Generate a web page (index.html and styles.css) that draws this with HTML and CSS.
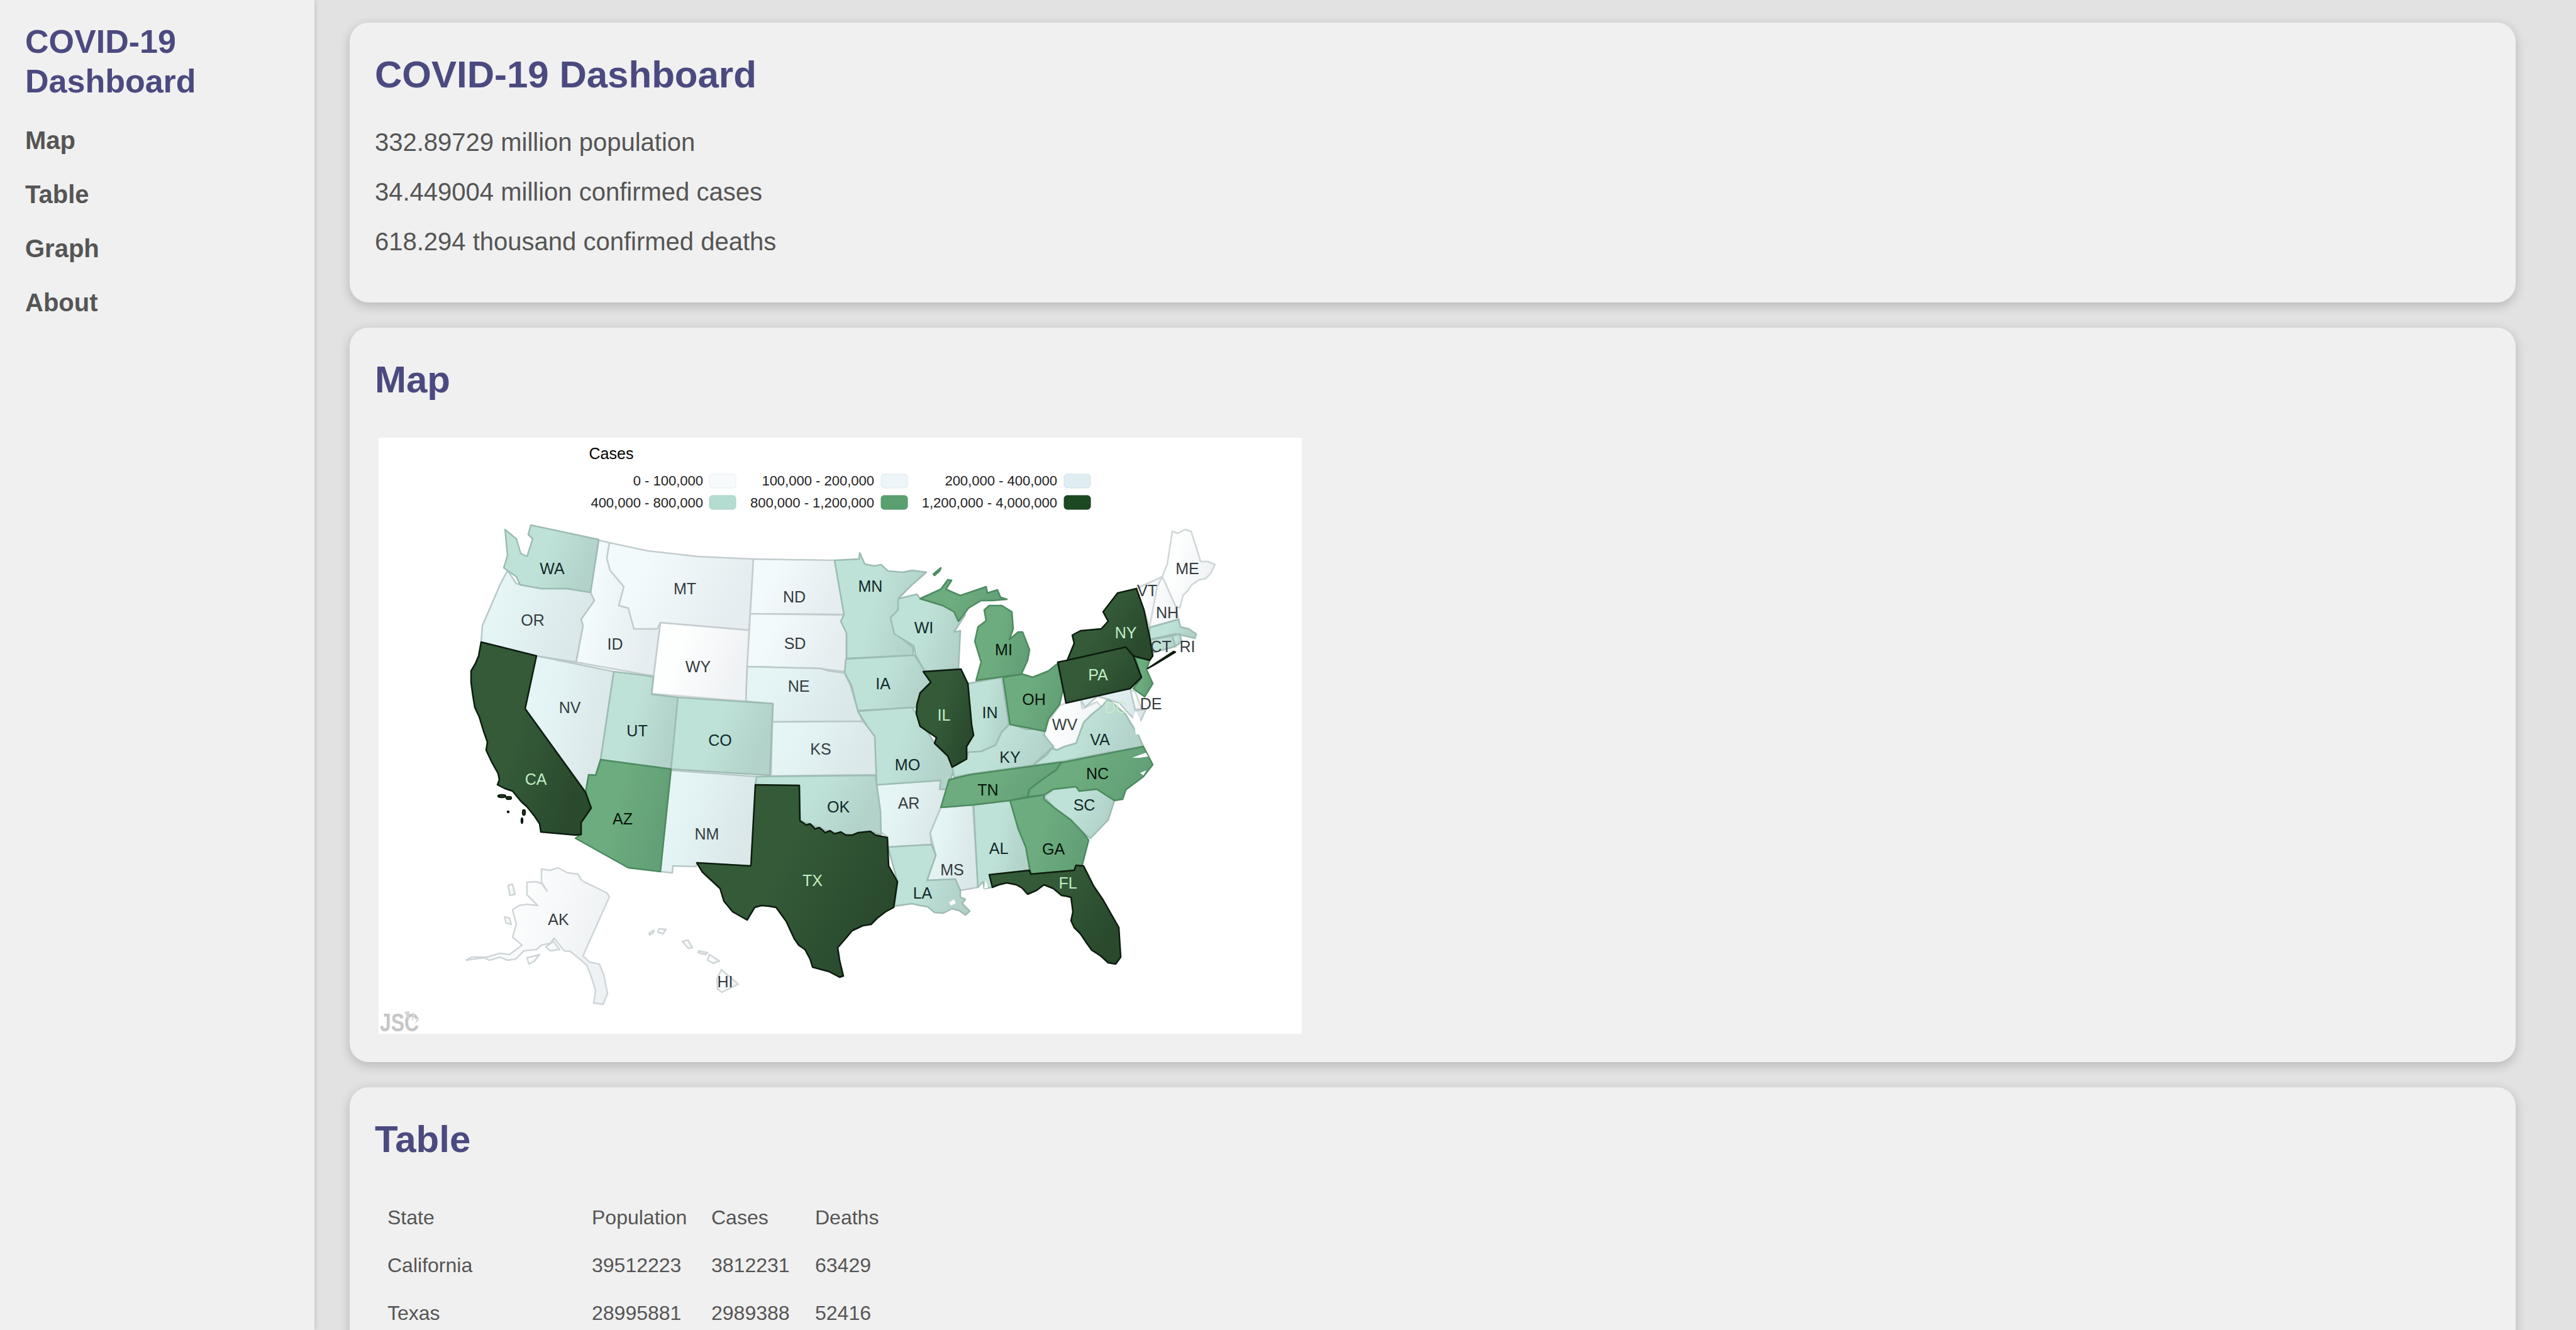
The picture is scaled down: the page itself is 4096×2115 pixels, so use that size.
FILE: index.html
```html
<!DOCTYPE html>
<html lang="en">
<head>
    <meta charset="UTF-8">
    <meta name="viewport" content="width=device-width, initial-scale=1.0">
    <title>COVID-19 Dashboard</title>
    <link rel="stylesheet" href="styles.css">
</head>
<body>
<div class="app">
    <nav class="sidebar">
        <h3>COVID-19 Dashboard</h3>
        <ul>
            <li><a href="#map">Map</a></li>
            <li><a href="#table">Table</a></li>
            <li><a href="#graph">Graph</a></li>
            <li><a href="#about">About</a></li>
        </ul>
    </nav>
    <main class="content">
        <section class="card">
            <h2>COVID-19 Dashboard</h2>
            <p>332.89729 million population</p>
            <p>34.449004 million confirmed cases</p>
            <p>618.294 thousand confirmed deaths</p>
        </section>

        <section class="card" id="map">
            <h2>Map</h2>
            <div class="map-wrap">
                <svg class="map" width="1468" height="948" viewBox="602 696 1468 948" xmlns="http://www.w3.org/2000/svg">
                    <defs>
                        <linearGradient id="l1" x1="0" y1="0" x2="1" y2="0.3"><stop offset="0.35" stop-color="#fdfefe"/><stop offset="1" stop-color="#eff2f4"/></linearGradient>
                        <linearGradient id="l2" x1="0" y1="0" x2="1" y2="0.3"><stop offset="0.3" stop-color="#f2fafc"/><stop offset="1" stop-color="#e6edf0"/></linearGradient>
                        <linearGradient id="l3" x1="0" y1="0" x2="1" y2="0.3"><stop offset="0.25" stop-color="#e5f5f5"/><stop offset="1" stop-color="#dbe7e9"/></linearGradient>
                        <linearGradient id="l4" x1="0" y1="0" x2="1" y2="0.3"><stop offset="0.5" stop-color="#bfe2d8"/><stop offset="1" stop-color="#b2d2ca"/></linearGradient>
                        <linearGradient id="l5" x1="0" y1="0" x2="1" y2="0.3"><stop offset="0.5" stop-color="#6dac7e"/><stop offset="1" stop-color="#63a077"/></linearGradient>
                        <linearGradient id="l6" x1="0" y1="0" x2="1" y2="0.5"><stop offset="0.5" stop-color="#345a38"/><stop offset="1" stop-color="#2a4a2e"/></linearGradient>
                    </defs>

                    <!-- legend -->
                    <g class="legend">
                        <text class="legend-title" x="972" y="730">Cases</text>
                        <text x="1118" y="772">0 - 100,000</text>
                        <text x="1390" y="772">100,000 - 200,000</text>
                        <text x="1681" y="772">200,000 - 400,000</text>
                        <text x="1118" y="807">400,000 - 800,000</text>
                        <text x="1390" y="807">800,000 - 1,200,000</text>
                        <text x="1681" y="807">1,200,000 - 4,000,000</text>
                        <rect x="1128" y="754" width="42" height="22" rx="5" fill="#f8fbfc" stroke="#e6edf0"/>
                        <rect x="1401" y="754" width="42" height="22" rx="5" fill="#edf5f8" stroke="#dde8ec"/>
                        <rect x="1692" y="754" width="42" height="22" rx="5" fill="#e0eef1" stroke="#d0e0e3"/>
                        <rect x="1128" y="788" width="42" height="22" rx="5" fill="#b5dcd0" stroke="#a8d0c4"/>
                        <rect x="1401" y="788" width="42" height="22" rx="5" fill="#5a9f6f" stroke="#4f9465"/>
                        <rect x="1692" y="788" width="42" height="22" rx="5" fill="#1c4822" stroke="#153a1b"/>
                    </g>

                    <!-- 0 - 100,000 -->
                    <g class="lvl1" fill="url(#l1)">
                        <polygon points="1050,990 1191,1002 1186,1115 1036,1103"/>
                        <polygon points="1864,845 1873,848 1884,842 1894,845 1902,870 1909,893 1921,893 1932,898 1925,912 1917,920 1907,922 1895,930 1888,940 1881,947 1876,967 1869,963 1848,917 1856,897"/>
                        <polygon points="1848,917 1869,963 1874,985 1828,997 1819,970 1840,933"/>
                        <polygon points="1807,936 1848,917 1840,933 1828,997 1819,970"/>
                        <polygon points="1660,1165 1667,1147 1685,1122 1695,1118 1718,1111 1721,1127 1744,1116 1751,1124 1736,1136 1723,1149 1711,1182 1693,1187 1680,1193 1665,1180"/>
                        <polygon points="1797,1097 1805,1100 1815,1127 1805,1128"/>
                        <polygon points="861,1382 874,1384 887,1380 903,1388 919,1390 925,1400 930,1403 945,1410 965,1420 969,1426 927,1520 937,1530 953,1533 960,1550 966,1580 959,1597 944,1595 947,1575 939,1550 933,1535 924,1527 907,1513 897,1512 890,1503 881,1492 875,1500 861,1503 853,1510 833,1512 820,1525 807,1527 795,1522 778,1527 770,1523 741,1527 750,1522 775,1522 795,1516 810,1518 830,1503 815,1490 821,1470 815,1447 825,1440 838,1438 855,1440 838,1423 838,1403 852,1402 861,1405 870,1417 861,1403"/>
                        <polygon points="808,1408 815,1406 819,1422 811,1424"/>
                        <polygon points="802,1458 810,1460 813,1470 805,1468"/>
                        <polygon points="838,1523 858,1518 850,1528 841,1533"/>
                        <polygon points="868,1506 880,1497 890,1510 875,1512"/>
                        <polygon points="1147,1542 1174,1565 1148,1578 1141,1573 1140,1557"/>
                        <polygon points="1128,1518 1144,1528 1134,1532 1125,1527"/>
                        <polygon points="1085,1497 1094,1495 1101,1507 1094,1508"/>
                        <polygon points="1048,1477 1059,1478 1054,1485 1046,1482"/>
                        <polygon points="1111,1512 1125,1515 1122,1518 1110,1515"/>
                        <polygon points="1032,1484 1040,1479 1038,1484 1033,1487"/>
                    </g>

                    <!-- 100,000 - 200,000 -->
                    <g class="lvl2" fill="url(#l2)">
                        <polygon points="952,859 969,863 965,888 970,907 992,933 984,963 999,967 1008,1000 1045,1000 1050,990 1039,1075 916,1053 927,995 924,985 945,955 939,942"/>
                        <polygon points="969,863 1030,876 1110,885 1198,889 1191,1002 1050,990 1045,1000 1008,1000 999,967 984,963 992,933 970,907 965,888"/>
                        <polygon points="1198,889 1327,891 1342,977 1193,976"/>
                        <polygon points="1193,976 1342,978 1337,988 1346,1002 1346,1068 1318,1065 1304,1063 1188,1060"/>
                    </g>

                    <!-- 200,000 - 400,000 -->
                    <g class="lvl3" fill="url(#l3)">
                        <polygon points="807,907 821,928 861,936 901,936 939,942 945,955 924,985 927,995 916,1053 853,1043 765,1021 767,995 795,930"/>
                        <polygon points="853,1043 976,1068 955,1208 950,1232 936,1232 932,1260 835,1127"/>
                        <polygon points="1188,1060 1304,1063 1318,1067 1343,1070 1352,1090 1364,1130 1372,1147 1228,1148 1229,1119 1186,1115"/>
                        <polygon points="1228,1148 1372,1147 1379,1155 1391,1171 1394,1232 1226,1234"/>
                        <polygon points="1067,1225 1203,1235 1194,1377 1108,1372 1107,1378 1070,1377 1069,1388 1050,1386"/>
                        <polygon points="1394,1248 1496,1241 1496,1255 1507,1255 1496,1284 1479,1325 1481,1343 1412,1347 1411,1331 1399,1322"/>
                        <polygon points="1496,1284 1547,1280 1555,1411 1527,1416 1519,1398 1474,1400 1488,1360 1479,1325"/>
                        <polygon points="1695,1118 1797,1095 1805,1130 1822,1128 1812,1150 1795,1135 1780,1118 1745,1107 1725,1125 1718,1111"/>
                    </g>

                    <!-- 400,000 - 800,000 -->
                    <g class="lvl4" fill="url(#l4)">
                        <polygon points="844,835 952,858 939,942 901,936 861,936 827,930 821,917 801,903 807,883 803,842 821,857 828,880 838,885 847,857 840,850"/>
                        <polygon points="976,1068 1039,1076 1036,1104 1078,1109 1067,1223 955,1208"/>
                        <polygon points="1078,1109 1229,1119 1224,1233 1067,1223"/>
                        <polygon points="1327,891 1366,889 1367,879 1375,897 1390,900 1401,898 1412,908 1435,910 1450,907 1473,910 1450,930 1430,950 1427,973 1418,983 1424,1007 1452,1030 1452,1042 1346,1047 1346,1007 1337,988 1342,977"/>
                        <polygon points="1428,952 1458,945 1463,952 1499,963 1519,973 1523,987 1535,977 1517,1005 1527,1003 1524,1063 1471,1068 1456,1042 1453,1027 1422,1008 1416,982 1428,970"/>
                        <polygon points="1345,1048 1454,1042 1471,1068 1480,1085 1463,1102 1458,1125 1364,1130 1354,1090 1343,1070"/>
                        <polygon points="1364,1131 1450,1125 1458,1136 1478,1169 1486,1182 1507,1204 1517,1224 1512,1238 1507,1255 1494,1255 1496,1241 1394,1248 1391,1171 1379,1155"/>
                        <polygon points="1203,1235 1392,1233 1400,1290 1401,1328 1384,1322 1355,1328 1320,1323 1272,1305 1271,1249 1201,1248"/>
                        <polygon points="1539,1087 1593,1077 1604,1152 1593,1164 1583,1185 1560,1195 1537,1197 1537,1187 1548,1169 1545,1153"/>
                        <polygon points="1517,1236 1542,1231 1642,1217 1675,1187 1660,1169 1662,1158 1632,1160 1606,1151 1593,1164 1583,1185 1560,1195 1540,1196 1537,1207 1514,1220"/>
                        <polygon points="1642,1217 1688,1211 1760,1197 1818,1187 1810,1169 1795,1145 1790,1136 1774,1122 1762,1112 1751,1124 1736,1136 1723,1149 1711,1182 1693,1187 1680,1193 1672,1190 1665,1200"/>
                        <polygon points="1548,1280 1606,1273 1619,1318 1631,1347 1637,1384 1573,1391 1578,1411 1565,1413 1563,1402 1555,1411"/>
                        <polygon points="1412,1347 1481,1343 1488,1360 1474,1400 1519,1398 1527,1416 1527,1427 1535,1430 1530,1437 1542,1449 1535,1455 1525,1448 1514,1445 1500,1452 1486,1451 1475,1442 1463,1440 1450,1437 1422,1441 1427,1402"/>
                        <polygon points="1660,1267 1675,1255 1711,1251 1716,1258 1744,1255 1772,1273 1762,1304 1734,1333 1723,1325 1703,1304 1677,1285"/>
                        <polygon points="1828,998 1874,985 1877,997 1890,1000 1902,1008 1900,1015 1892,1013 1869,1008 1828,1017"/>
                        <polygon points="1828,1018 1864,1011 1869,1028 1833,1038"/>
                        <polygon points="1864,1011 1876,1008 1879,1020 1869,1028"/>
                    </g>

                    <!-- 800,000 - 1,200,000 -->
                    <g class="lvl5" fill="url(#l5)">
                        <polygon points="955,1208 1067,1223 1050,1386 999,1380 915,1333 924,1327 924,1308 940,1285 931,1260 936,1232 947,1233"/>
                        <polygon points="1463,952 1496,937 1507,922 1513,923 1504,937 1527,947 1568,933 1570,943 1586,938 1591,950 1601,953 1578,955 1560,955 1540,967 1524,988 1517,973 1499,963"/>
                        <polygon points="1573,963 1593,963 1609,973 1611,1000 1605,1017 1619,1005 1626,1005 1637,1033 1634,1050 1624,1072 1552,1082 1560,1053 1550,1020 1555,997 1568,987 1565,970"/>
                        <polygon points="1484,913 1496,903 1494,908 1486,915"/>
                        <polygon points="1595,1077 1626,1072 1642,1077 1667,1067 1682,1055 1690,1097 1685,1120 1667,1143 1662,1163 1632,1157 1606,1152"/>
                        <polygon points="1496,1284 1509,1240 1542,1232 1688,1212 1680,1224 1657,1240 1637,1255 1634,1267 1606,1273 1547,1280"/>
                        <polygon points="1687,1213 1818,1187 1833,1216 1818,1235 1790,1256 1785,1271 1772,1273 1744,1255 1716,1258 1711,1251 1675,1255 1660,1264 1634,1267 1637,1255 1657,1240 1680,1224"/>
                        <polygon points="1606,1273 1660,1264 1660,1271 1677,1285 1703,1304 1723,1325 1731,1336 1721,1375 1708,1384 1639,1390 1631,1347 1619,1318"/>
                        <polygon points="1805,1045 1828,1050 1823,1065 1833,1087 1820,1108 1802,1095 1815,1078"/>
                    </g>

                    <!-- 1,200,000 - 4,000,000 -->
                    <g class="lvl6" fill="url(#l6)">
                        <polygon points="765,1021 853,1043 835,1127 931,1260 940,1285 924,1308 924,1327 916,1328 860,1323 858,1310 850,1298 838,1283 829,1275 815,1258 803,1254 791,1248 794,1240 792,1230 782,1212 773,1193 775,1180 769,1163 762,1140 755,1125 752,1107 749,1085 749,1067 756,1055 761,1043"/>
                        <polygon points="1201,1248 1271,1249 1272,1305 1282,1312 1288,1310 1296,1318 1303,1316 1312,1324 1320,1321 1327,1326 1337,1323 1345,1328 1355,1328 1365,1324 1384,1322 1392,1328 1411,1332 1413,1377 1427,1402 1421,1443 1408,1450 1395,1460 1385,1470 1372,1472 1355,1480 1345,1492 1332,1507 1334,1520 1335,1527 1341,1552 1335,1554 1318,1545 1292,1538 1288,1525 1280,1510 1270,1503 1263,1493 1250,1465 1234,1443 1222,1441 1211,1440 1200,1443 1188,1463 1165,1450 1151,1433 1145,1413 1117,1387 1108,1372 1194,1377"/>
                        <polygon points="1468,1068 1528,1064 1539,1087 1545,1153 1548,1169 1537,1187 1537,1207 1514,1220 1507,1202 1486,1182 1489,1173 1463,1155 1457,1135 1458,1120 1463,1102 1480,1085"/>
                        <polygon points="1807,936 1819,970 1828,1013 1833,1043 1828,1050 1802,1043 1790,1030 1697,1050 1708,1023 1705,1010 1718,1003 1751,1000 1762,988 1754,973 1777,943"/>
                        <polygon points="1825,1063 1866,1036 1869,1037 1836,1057"/>
                        <polygon points="1682,1053 1697,1050 1790,1029 1802,1043 1815,1077 1797,1095 1695,1118"/>
                        <polygon points="1573,1391 1637,1384 1639,1390 1708,1384 1711,1376 1723,1377 1739,1409 1754,1431 1779,1475 1782,1522 1774,1533 1762,1531 1750,1520 1736,1511 1728,1500 1718,1485 1708,1475 1703,1464 1706,1450 1703,1427 1695,1425 1688,1424 1675,1413 1660,1407 1648,1416 1634,1422 1625,1412 1616,1407 1601,1404 1588,1407 1578,1411"/>
                        <ellipse cx="798" cy="1266" rx="6" ry="2"/>
                        <ellipse cx="809" cy="1269" rx="4" ry="2"/>
                        <ellipse cx="808" cy="1291" rx="1" ry="1"/>
                        <ellipse cx="833" cy="1292" rx="2" ry="4"/>
                        <ellipse cx="830" cy="1305" rx="1" ry="4"/>
                    </g>

                    <!-- inlets -->
                    <g class="water">
                        <polygon points="1802,1140 1806,1130 1815,1150 1812,1168 1806,1168"/>
                        <polygon points="1800,1205 1822,1197 1826,1203 1812,1205"/>
                        <polygon points="1813,1229 1823,1225 1818,1233"/>
                        <polygon points="1509,1435 1517,1430 1520,1436 1512,1440"/>
                        <polygon points="1392,1467 1397,1460 1399,1468 1394,1472"/>
                        <polygon points="1565,1413 1567,1400 1571,1412"/>
                    </g>

                    <!-- labels -->
                    <g class="labels dark">
                        <text x="878" y="913">WA</text><text x="1384" y="941">MN</text><text x="1469" y="1007">WI</text>
                        <text x="1013" y="1171">UT</text><text x="1145" y="1186">CO</text><text x="1404" y="1096">IA</text>
                        <text x="1443" y="1225">MO</text><text x="1333" y="1292">OK</text><text x="1574" y="1142">IN</text>
                        <text x="1606" y="1213">KY</text><text x="1749" y="1185">VA</text><text x="1724" y="1289">SC</text>
                        <text x="1588" y="1358">AL</text><text x="1467" y="1429">LA</text>
                    </g>
                    <g class="labels black">
                        <text x="990" y="1311">AZ</text><text x="1596" y="1042">MI</text><text x="1644" y="1121">OH</text>
                        <text x="1571" y="1265">TN</text><text x="1745" y="1239">NC</text><text x="1675" y="1359">GA</text>
                    </g>
                    <g class="labels grey">
                        <text x="1089" y="945">MT</text><text x="1263" y="958">ND</text><text x="847" y="995">OR</text>
                        <text x="978" y="1033">ID</text><text x="1110" y="1069">WY</text><text x="1264" y="1032">SD</text>
                        <text x="1270" y="1100">NE</text><text x="906" y="1134">NV</text><text x="1305" y="1200">KS</text>
                        <text x="1124" y="1335">NM</text><text x="1445" y="1286">AR</text><text x="1514" y="1392">MS</text>
                        <text x="1824" y="948">VT</text><text x="1856" y="983">NH</text><text x="1888" y="913">ME</text>
                        <text x="1846" y="1037">CT</text><text x="1888" y="1037">RI</text><text x="1830" y="1128">DE</text>
                        <text x="1693" y="1161">WV</text><text x="888" y="1471">AK</text><text x="1153" y="1570">HI</text>
                    </g>
                    <g class="labels light">
                        <text x="852" y="1248">CA</text><text x="1292" y="1409">TX</text><text x="1501" y="1146">IL</text>
                        <text x="1790" y="1015">NY</text><text x="1746" y="1082">PA</text><text x="1698" y="1413">FL</text>
                        <text class="faint" x="1774" y="1134">DC</text>
                    </g>

                    <!-- watermark -->
                    <g class="logo">
                        <text x="604" y="1640" textLength="62" lengthAdjust="spacingAndGlyphs">JSC</text>
                        <polygon points="643,1609 651,1608 650,1622"/>
                        <polygon points="656,1610 660,1613 655,1625"/>
                        <polygon points="665,1618 666,1622 659,1628"/>
                    </g>
                </svg>
            </div>
        </section>

        <section class="card" id="table">
            <h2>Table</h2>
            <table>
                <tr><td class="col-state">State</td><td class="col-pop">Population</td><td class="col-cases">Cases</td><td class="col-deaths">Deaths</td></tr>
                <tr><td>California</td><td>39512223</td><td>3812231</td><td>63429</td></tr>
                <tr><td>Texas</td><td>28995881</td><td>2989388</td><td>52416</td></tr>
            </table>
        </section>
    </main>
</div>
</body>
</html>
```

FILE: styles.css
```css
html, body {
    margin: 0;
    padding: 0;
}

body {
    font-family: "Liberation Sans", Arial, sans-serif;
    font-size: 40px;
    color: #555;
    background-color: #e2e2e2;
}

.app {
    display: flex;
    height: 100vh;
    overflow: hidden;
}

.sidebar {
    flex: 0 0 500px;
    box-sizing: border-box;
    padding: 35px 40px;
    background-color: #f0f0f0;
    box-shadow: 2px 0 6px rgba(0, 0, 0, 0.12);
}

.sidebar h3 {
    margin: 0 0 20px;
    font-size: 52px;
    line-height: 62.5px;
    color: #4b4a80;
}

.sidebar ul {
    list-style-type: none;
    margin: 0;
    padding: 0;
}

.sidebar li {
    height: 86px;
    line-height: 86px;
}

.sidebar a {
    font-weight: bold;
    color: #555;
    text-decoration: none;
}

.content {
    flex: 1;
    padding: 36px 96px 0 56px;
}

.card {
    box-sizing: border-box;
    margin-bottom: 40px;
    padding: 40px;
    border-radius: 30px;
    background-color: #f0f0f0;
    box-shadow: 0 5px 18px rgba(0, 0, 0, 0.2);
}

.card h2 {
    margin: 8px 0 50px;
    font-size: 60px;
    line-height: 69px;
    color: #4b4a80;
}

.card p {
    margin: 33px 0;
    line-height: 46px;
}

.card p:last-child {
    margin-bottom: 34px;
}

.map-wrap {
    margin: 58px 0 5px 6px;
    line-height: 0;
}

.map {
    display: block;
    overflow: visible;
    background-color: #fff;
}

.map polygon,
.map ellipse {
    stroke-width: 2.5;
    stroke-linejoin: round;
}

.lvl1 { stroke: #cfd6d8; }
.lvl2 { stroke: #c3cdcf; }
.lvl3 { stroke: #b9c7c8; }
.lvl4 { stroke: #9dbcb3; }
.lvl5 { stroke: #4d8a60; }
.lvl6 { stroke: #0c1c0e; }

.map .water polygon {
    fill: #fff;
    stroke: none;
}

.legend text {
    font-size: 22px;
    fill: #222;
    text-anchor: end;
}

.legend .legend-title {
    font-size: 25px;
    fill: #000;
    text-anchor: middle;
}

.labels text {
    font-size: 25px;
    text-anchor: middle;
}

.labels.dark { fill: #10292a; }
.labels.black { fill: #05130a; }
.labels.grey { fill: #353c40; }
.labels.light { fill: #c3eec4; }
.labels .faint { fill: #c9efcb; opacity: 0.8; }

.logo text {
    font-size: 40px;
    font-weight: bold;
    fill: #c6c6c6;
}

.map .logo polygon {
    fill: #d4d4d4;
    stroke: none;
}

table {
    table-layout: fixed;
    width: 1110px;
    border-spacing: 5px;
    font-size: 32px;
}

td {
    padding: 17px 15px;
    line-height: 37px;
    color: #555;
}

.col-state { width: 320px; box-sizing: border-box; }
.col-pop { width: 185px; box-sizing: border-box; }
.col-cases { width: 160px; box-sizing: border-box; }
.col-deaths { box-sizing: border-box; }
```
